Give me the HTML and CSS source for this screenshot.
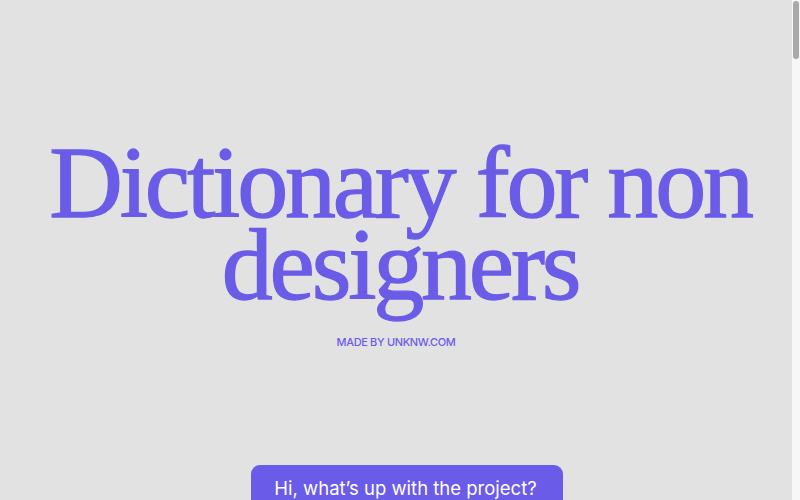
FILE: index.html
```html
<!DOCTYPE html>
<html lang="en">
<head>
<meta charset="utf-8">
<title>Dictionary for non designers</title>
<link rel="stylesheet" href="styles.css">
</head>
<body>
<main class="page">
  <section class="hero">
    <h1 class="title">Dictionary for non designers</h1>
    <p class="credit">MADE BY UNKNW.COM</p>
  </section>
  <section class="chat">
    <div class="bubble">Hi, what’s up with the project?</div>
  </section>
</main>
<div class="scrollbar"><div class="thumb"></div></div>
</body>
</html>
```
FILE: styles.css
```css
html, body {
  margin: 0;
  padding: 0;
  background: #e2e2e3;
}
html {
  scrollbar-width: none;
}
.page {
  min-height: 1600px;
  display: flex;
  flex-direction: column;
  align-items: center;
}
.hero {
  display: flex;
  flex-direction: column;
  align-items: center;
  padding-top: 142px;
}
.title {
  margin: 0;
  width: 730px;
  font-family: "Liberation Serif", "Times New Roman", serif;
  font-weight: 400;
  font-size: 102px;
  line-height: 82px;
  letter-spacing: -3.2px;
  text-align: center;
  color: #6b5ce7;
  -webkit-text-stroke: 1.3px #6b5ce7;
}
.credit {
  margin: 30px 8px 0 0;
  font-family: Inter, "Liberation Sans", sans-serif;
  font-size: 11px;
  font-weight: 500;
  line-height: 13px;
  letter-spacing: -0.35px;
  color: #6b5ce7;
}
.chat {
  margin-top: 116px;
  padding-left: 14px;
}
.bubble {
  background: #6a5be8;
  color: #ffffff;
  font-family: Inter, "Liberation Sans", sans-serif;
  font-size: 18.5px;
  line-height: 24px;
  padding: 11px 26px 14px 23px;
  border-radius: 9px;
}
.scrollbar {
  position: fixed;
  top: 0;
  right: 0;
  width: 8px;
  height: 100%;
  background: #f7f7f7;
}
.thumb {
  margin: 1px 1px 0 1px;
  height: 58px;
  border-radius: 3px;
  background: #a9a9a9;
}
```
